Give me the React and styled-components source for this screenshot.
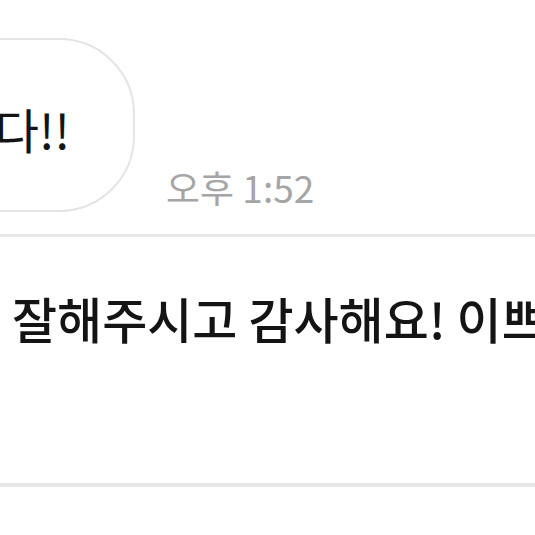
import styled, { createGlobalStyle } from 'styled-components';

const GlobalStyle = createGlobalStyle`
  html, body {
    margin: 0;
    padding: 0;
    background: #fff;
    font-family: "Noto Sans CJK KR", "Noto Sans", sans-serif;
    overflow: hidden;
  }
`;

const Page = styled.div`
  width: 535px;
  height: 535px;
  overflow: hidden;
  background: #fff;
`;

const ChatRow = styled.div`
  display: flex;
  align-items: flex-end;
  gap: 31px;
  height: 234px;
  box-sizing: border-box;
  padding-top: 39px;
`;

const Bubble = styled.div`
  width: 400px;
  height: 174px;
  margin-left: -265px;
  box-sizing: border-box;
  padding: 6px 63px 0 0;
  border: 2px solid #e4e4e4;
  border-radius: 76px;
  display: flex;
  align-items: center;
  justify-content: flex-end;
  overflow: hidden;
  white-space: nowrap;
  font-size: 48px;
  line-height: 1;
  color: #141414;
  margin-bottom: 22px;
`;

const Time = styled.div`
  font-size: 37px;
  color: #a5a5a5;
  line-height: 1;
  margin-bottom: 28px;
  white-space: nowrap;
`;

const Divider = styled.div`
  height: ${(p) => p.$size}px;
  background: #e7e7e7;
`;

const Review = styled.div`
  height: 246px;
  box-sizing: border-box;
  padding: 56px 0 0 12px;
  font-size: 49px;
  font-weight: 500;
  line-height: 1;
  color: #141414;
  white-space: nowrap;
  overflow: hidden;
`;

export default function App() {
  return (
    <Page>
      <GlobalStyle />
      <ChatRow>
        <Bubble>정말 감사합니다!!</Bubble>
        <Time>오후 1:52</Time>
      </ChatRow>
      <Divider $size={3} />
      <Review>잘해주시고 감사해요! 이쁘게 잘 쓸게요</Review>
      <Divider $size={4} />
    </Page>
  );
}
